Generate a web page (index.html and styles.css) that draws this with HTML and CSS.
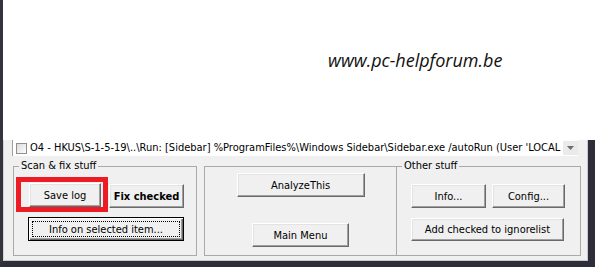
FILE: index.html
```html
<!DOCTYPE html>
<html lang="en">
<head>
    <meta charset="UTF-8">
    <title>HijackThis</title>
    <link rel="stylesheet" href="styles.css">
</head>
<body>
    <div class="top">
        <span class="watermark">www.pc-helpforum.be</span>
    </div>

    <div class="window">
        <div class="list">
            <span class="check"></span>
            <span class="list-text">O4 - HKUS\S-1-5-19\..\Run: [Sidebar] %ProgramFiles%\Windows Sidebar\Sidebar.exe /autoRun (User 'LOCAL</span>
            <span class="scroll-btn">
                <svg width="7" height="4" viewBox="0 0 7 4"><path d="M0 0h7L3.5 4z" fill="#6d6d6d"/></svg>
            </span>
        </div>

        <div class="groups">
            <fieldset class="group group-scan">
                <legend>Scan &amp; fix stuff</legend>
                <div class="btn-grid scan-grid">
                    <button class="btn">Save log</button>
                    <button class="btn btn-bold">Fix checked</button>
                    <button class="btn btn-default btn-wide">Info on selected item...</button>
                    <div class="mark"></div>
                </div>
            </fieldset>

            <fieldset class="group group-mid">
                <div class="mid-col">
                    <button class="btn btn-analyze">AnalyzeThis</button>
                    <button class="btn btn-menu">Main Menu</button>
                </div>
            </fieldset>

            <fieldset class="group group-other">
                <legend>Other stuff</legend>
                <div class="btn-grid other-grid">
                    <button class="btn">Info...</button>
                    <button class="btn">Config...</button>
                    <button class="btn btn-wide btn-short">Add checked to ignorelist</button>
                </div>
            </fieldset>
        </div>
    </div>
</body>
</html>
```

FILE: styles.css
```css
body {
    margin: 0;
    background: #fff;
    font-family: "DejaVu Sans Condensed", "DejaVu Sans", sans-serif;
    font-size: 11px;
    color: #000;
}

.top {
    height: 140px;
    border-left: 3px solid #34343f;
    box-sizing: border-box;
    padding: 49px 0 0 325px;
}

.watermark {
    font-family: "Open Sans", sans-serif;
    font-style: italic;
    font-size: 18px;
    line-height: 22px;
    color: #111;
}

.window {
    width: 595px;
    box-sizing: border-box;
    background: #f0f0f0;
    border-left: 3px solid #34343f;
    border-right: 7px solid #2e2e3a;
    border-bottom: 6px solid #2e2e3a;
    box-shadow: inset 1px 0 0 #d4d4d4, inset -1px -1px 0 #c9c9c9;
    padding-bottom: 5px;
}

.list {
    display: flex;
    align-items: center;
    width: 566px;
    height: 16px;
    margin-left: 9px;
    background: #fff;
    border-left: 1px solid #a0a0a0;
    box-sizing: border-box;
}

.check {
    flex: none;
    width: 11px;
    height: 11px;
    margin: 0 3px 0 3px;
    border: 1px solid #8e8f8f;
    box-sizing: border-box;
    background: linear-gradient(135deg, #dcdcdc, #fdfdfd);
}

.list-text {
    flex: 1;
    white-space: nowrap;
    line-height: 14px;
}

.scroll-btn {
    flex: none;
    display: flex;
    align-items: center;
    justify-content: center;
    width: 15px;
    height: 14px;
    background: #eaeaea;
}

.groups {
    display: flex;
    align-items: flex-start;
    margin: 3px 0 0 10px;
}

.group {
    margin: 0;
    padding: 0;
    min-width: 0;
    border: 1px solid #a9a9a9;
    box-sizing: border-box;
}

.group legend {
    margin-left: 5px;
    padding: 0 2px;
    font-size: 11px;
    line-height: 14px;
}

.group-scan {
    width: 184px;
    height: 97px;
}

.group-mid {
    width: 193px;
    height: 90px;
    margin: 7px 0 0 7px;
}

.group-other {
    width: 185px;
    height: 97px;
    margin-left: -1px;
}

.btn-grid {
    position: relative;
    display: grid;
}

.scan-grid {
    grid-template-columns: 72px 75px;
    column-gap: 8px;
    row-gap: 9px;
    padding: 10px 0 0 15px;
}

.other-grid {
    grid-template-columns: 75px 73px;
    column-gap: 6px;
    row-gap: 10px;
    padding: 11px 0 0 14px;
}

.btn {
    position: relative;
    height: 24px;
    padding: 0;
    font-family: inherit;
    font-size: 11px;
    color: #000;
    background: #f0f0f0;
    border: 1px solid;
    border-color: #fff #696969 #696969 #fff;
    box-shadow: inset -1px -1px 0 #a0a0a0, inset 1px 1px 0 #e3e3e3;
    box-sizing: border-box;
}

.btn-bold {
    font-weight: bold;
    margin-top: 1px;
}

.btn-wide {
    grid-column: 1 / 3;
}

.btn-short {
    height: 23px;
    width: 153px;
}

.btn-default {
    height: 24px;
    margin-left: -1px;
    border-color: #000;
    box-shadow: inset 1px 1px 0 #fff, inset -1px -1px 0 #696969, inset -2px -2px 0 #a0a0a0;
}

.btn-default::after {
    content: "";
    position: absolute;
    inset: 3px;
    border: 1px dotted #000;
}

.mark {
    position: absolute;
    left: 2px;
    top: 4px;
    width: 92px;
    height: 35px;
    border: 5px solid #ed1c24;
    box-sizing: border-box;
}

.mid-col {
    display: flex;
    flex-direction: column;
    align-items: center;
    gap: 26px;
    padding-top: 6px;
}

.btn-analyze {
    width: 128px;
}

.btn-menu {
    width: 97px;
}
```
